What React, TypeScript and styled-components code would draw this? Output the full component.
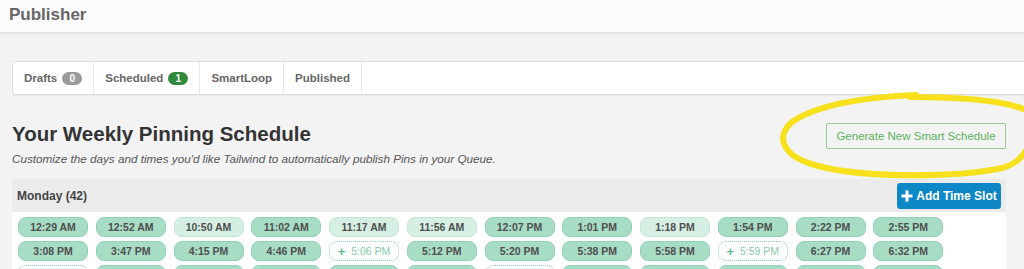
import React from "react";
import styled, { createGlobalStyle } from "styled-components";

const Global = createGlobalStyle`
  html, body { margin: 0; padding: 0; overflow: hidden; }
  body {
    background: #f3f3f3;
    font-family: "Liberation Sans", Arial, sans-serif;
    width: 1024px;
    height: 269px;
  }
  * { box-sizing: border-box; }
`;

const Page = styled.div`
  position: relative;
  width: 1024px;
  height: 269px;
  overflow: hidden;
`;

const TopBar = styled.header`
  height: 33px;
  background: #fbfbfb;
  border-bottom: 1px solid #e0e0e0;
  box-shadow: 0 1px 2px rgba(0, 0, 0, 0.05);
  padding-left: 9px;
`;

const AppTitle = styled.h1`
  margin: 0;
  font-size: 17px;
  line-height: 29px;
  font-weight: bold;
  color: #666;
`;

const Main = styled.main`
  padding: 0 18px 0 12px;
`;

const TabsPanel = styled.nav`
  margin-top: 28px;
  margin-right: -40px;
  height: 34px;
  background: #fff;
  border: 1px solid #dcdcdc;
  border-radius: 3px;
  display: flex;
  align-items: stretch;
  box-shadow: 0 1px 1px rgba(0, 0, 0, 0.03);
`;

const Tab = styled.div`
  display: flex;
  align-items: center;
  gap: 5px;
  padding: 0 11px 0 11px;
  border-right: 1px solid #e8e8e8;
  font-size: 11.5px;
  font-weight: bold;
  color: #666;
`;

const Badge = styled.span<{ $tone: "gray" | "green" }>`
  display: inline-flex;
  align-items: center;
  justify-content: center;
  width: 20px;
  height: 13px;
  border-radius: 7px;
  font-size: 10px;
  font-weight: bold;
  color: #fff;
  background: ${(p) => (p.$tone === "green" ? "#2f8a3c" : "#9a9a9a")};
`;

const HeadRow = styled.section`
  margin-top: 27px;
  display: flex;
  justify-content: space-between;
  align-items: flex-start;
`;

const HeadText = styled.div`
  display: flex;
  flex-direction: column;
`;

const Heading = styled.h2`
  margin: 0;
  font-size: 20.5px;
  line-height: 24px;
  font-weight: bold;
  color: #333;
`;

const Sub = styled.p`
  margin: 6px 0 0;
  font-size: 11.7px;
  line-height: 14px;
  font-style: italic;
  color: #555;
`;

const GenerateButton = styled.button`
  margin-top: 1px;
  width: 180px;
  height: 26px;
  background: transparent;
  border: 1px solid #8fcc8f;
  border-radius: 2px;
  color: #5cb25c;
  font-family: "Liberation Sans", Arial, sans-serif;
  font-size: 11.5px;
  padding: 0;
`;

const DayBar = styled.div`
  margin-top: 13px;
  height: 33px;
  background: #ebebeb;
  display: flex;
  align-items: center;
  justify-content: space-between;
  padding: 0 5px;
`;

const DayName = styled.span`
  font-size: 12px;
  font-weight: bold;
  color: #444;
`;

const AddButton = styled.button`
  height: 26px;
  width: 104px;
  border: none;
  border-radius: 3px;
  background: #0d87c6;
  color: #fff;
  display: flex;
  align-items: center;
  justify-content: center;
  gap: 3px;
  font-family: "Liberation Sans", Arial, sans-serif;
  font-size: 12px;
  font-weight: bold;
  padding: 0 4px;
`;

const SlotGrid = styled.div`
  background: #fff;
  padding: 5px 6px;
  display: grid;
  grid-template-columns: repeat(12, 70px);
  column-gap: 7.75px;
  row-gap: 4px;
`;

type Kind = "dark" | "light" | "open";

const Slot = styled.div<{ $kind: Kind }>`
  height: 20px;
  border-radius: 8px;
  display: flex;
  align-items: center;
  justify-content: center;
  gap: 6px;
  font-size: 10.5px;
  font-weight: ${(p) => (p.$kind === "open" ? "normal" : "bold")};
  color: ${(p) => (p.$kind === "open" ? "#86caa6" : "#4f4f4f")};
  background: ${(p) =>
    p.$kind === "dark" ? "#a7dcc5" : p.$kind === "light" ? "#d5efe3" : "#fff"};
  border: 1px ${(p) => (p.$kind === "open" ? "dotted" : "solid")}
    ${(p) =>
      p.$kind === "dark" ? "#93d1b6" : p.$kind === "light" ? "#c2e6d5" : "#8dcdb0"};
`;

const SlotPlus = styled.span`
  font-weight: bold;
  font-size: 13px;
  color: #5fb98e;
`;

const Annotation = styled.svg`
  position: absolute;
  left: 0;
  top: 0;
  pointer-events: none;
`;

const slots: [string, Kind][] = [
  ["12:29 AM", "dark"], ["12:52 AM", "dark"], ["10:50 AM", "light"], ["11:02 AM", "dark"],
  ["11:17 AM", "light"], ["11:56 AM", "light"], ["12:07 PM", "dark"], ["1:01 PM", "dark"],
  ["1:18 PM", "light"], ["1:54 PM", "dark"], ["2:22 PM", "dark"], ["2:55 PM", "dark"],
  ["3:08 PM", "dark"], ["3:47 PM", "dark"], ["4:15 PM", "dark"], ["4:46 PM", "dark"],
  ["5:06 PM", "open"], ["5:12 PM", "dark"], ["5:20 PM", "dark"], ["5:38 PM", "dark"],
  ["5:58 PM", "dark"], ["5:59 PM", "open"], ["6:27 PM", "dark"], ["6:32 PM", "dark"],
  ["6:40 PM", "open"], ["6:51 PM", "dark"], ["7:05 PM", "dark"], ["7:18 PM", "dark"],
  ["7:34 PM", "dark"], ["7:49 PM", "dark"], ["8:02 PM", "open"], ["8:15 PM", "dark"],
  ["8:31 PM", "dark"], ["8:47 PM", "dark"], ["9:03 PM", "dark"], ["9:22 PM", "dark"],
];

export default function App() {
  return (
    <Page>
      <Global />
      <TopBar>
        <AppTitle>Publisher</AppTitle>
      </TopBar>
      <Main>
        <TabsPanel>
          <Tab>
            Drafts <Badge $tone="gray">0</Badge>
          </Tab>
          <Tab>
            Scheduled <Badge $tone="green">1</Badge>
          </Tab>
          <Tab>SmartLoop</Tab>
          <Tab>Published</Tab>
        </TabsPanel>
        <HeadRow>
          <HeadText>
            <Heading>Your Weekly Pinning Schedule</Heading>
            <Sub>
              Customize the days and times you'd like Tailwind to automatically publish Pins in your Queue.
            </Sub>
          </HeadText>
          <GenerateButton>Generate New Smart Schedule</GenerateButton>
        </HeadRow>
        <DayBar>
          <DayName>Monday (42)</DayName>
          <AddButton>
            <svg width="12" height="12" viewBox="0 0 12 12">
              <path d="M6 0.5v11M0.5 6h11" stroke="#fff" strokeWidth="3" />
            </svg>
            Add Time Slot
          </AddButton>
        </DayBar>
        <SlotGrid>
          {slots.map(([t, k], i) => (
            <Slot key={i} $kind={k}>
              {k === "open" && <SlotPlus>+</SlotPlus>}
              {t}
            </Slot>
          ))}
        </SlotGrid>
      </Main>
      <Annotation width="1024" height="269" viewBox="0 0 1024 269">
        <path
          d="M 916 95 C 870 97, 818 104, 792 122 C 776 136, 780 156, 818 166 C 868 179, 960 177, 1002 168 C 1032 160, 1036 128, 1030 112 C 1010 101, 965 97, 910 97"
          fill="none"
          stroke="#f6e11c"
          strokeWidth="6"
          strokeLinecap="round"
        />
      </Annotation>
    </Page>
  );
}
